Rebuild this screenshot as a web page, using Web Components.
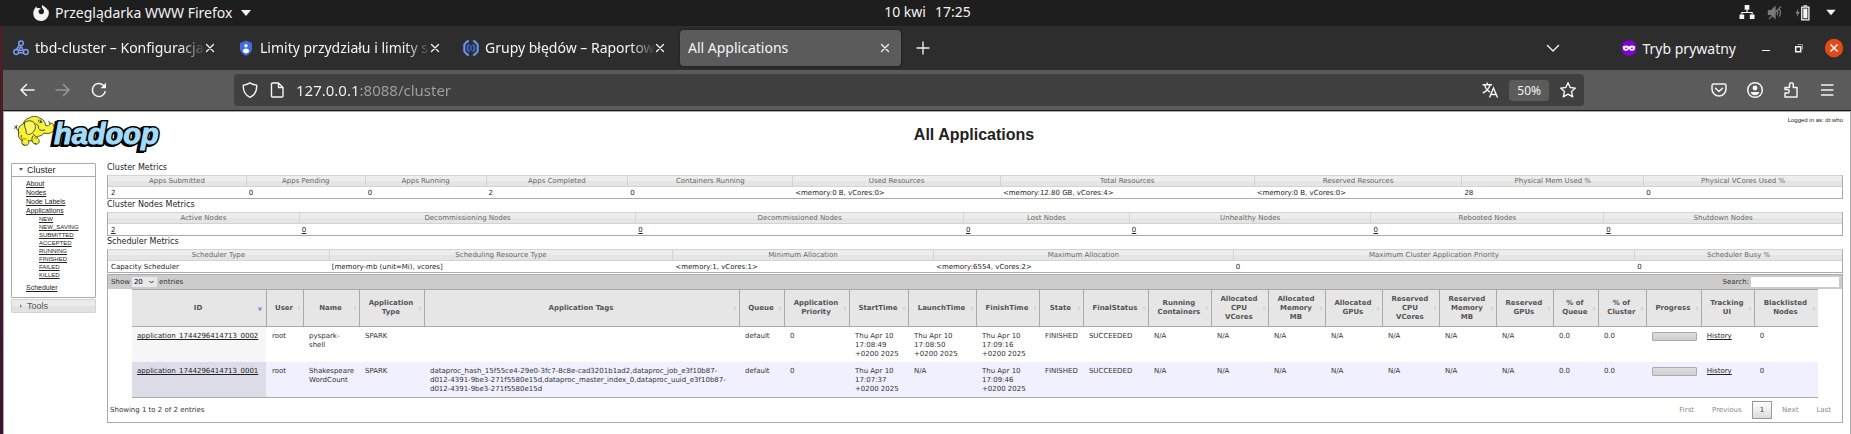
<!DOCTYPE html>
<html lang="pl">
<head>
<meta charset="utf-8">
<title>All Applications</title>
<style>
  html, body { margin: 0; height: 100%; }
  body { font-family: "Noto Sans", "Open Sans", sans-serif; background: #2d2d2d; }
</style>
</head>
<body>
<desktop-shell></desktop-shell>

<script>
const define = (name, html) => customElements.define(name, class extends HTMLElement {
  connectedCallback() {
    if (this.shadowRoot) return;
    const root = this.attachShadow({ mode: 'open' });
    const tpl = document.createElement('template');
    tpl.innerHTML = typeof html === 'function' ? html(this) : html;
    root.append(tpl.content.cloneNode(true));
  }
});

/* ---------- icons ---------- */
const line = (d, w = 1.4) => `<path d="${d}" fill="none" stroke="currentColor" stroke-width="${w}" stroke-linecap="round" stroke-linejoin="round"/>`;
const ICONS = {
  firefox: `<path fill="#f4f4f4" d="M3.2 1.2C3.6 2.4 4 3 5 3.2 6.200 2.800 7.200 3.200 8 4 6.800 4.200 6.400 5 5.600 5.400 5.200 7.800 6.600 9.200 8.200 9.200 10.200 9.200 11.200 7.800 11 6.200 10.800 4.800 9.800 3.800 9 2.600 8.700 1.700 9 .8 9.600 0 11 2 13.600 2.600 14.800 5.200 15 4.800 15 4.400 14.900 3.900 16 6 16.200 8.600 15.200 11 13.800 14.200 11 16 8 16 3.800 16 .5 13 .3 8.800 .2 6.200 1 4 2.300 2.900Z"/>`,
  triangle: `<path fill="#f4f4f4" d="M3 5h10l-5 6z"/>`,
  network: `<path fill="#f4f4f4" d="M5.500 0h5v5h-5zM0 10h5v5H0zM11 10h5v5h-5z"/><path d="M8 5v3M2.500 10V8h11v2" fill="none" stroke="#f4f4f4" stroke-width="1.200"/>`,
  mute: `<g fill="none" stroke="#7b7b7b" stroke-width="1.300"><path fill="#7b7b7b" d="M1 6h3l4-4v12L4 10H1z"/><path d="M10 5q2 3 0 6M12.200 3.500q3.400 4.500 0 9M1.500 15 14.500 1.500"/></g>`,
  battery: `<path fill="#8a8a8a" d="M3.500 3.500 0 9h2l-.8 4L4.500 7.500h-2z"/><path fill="none" stroke="#f4f4f4" stroke-width="1.400" d="M6.700 2.200h7.600v13.600H6.700z"/><path fill="#f4f4f4" d="M8.300 3.800h4.400v10.400H8.300zM8.500.2h4v1.500h-4z"/>`,
  cluster: `<g fill="none" stroke="#7a9bea" stroke-width="1.500"><circle cx="8" cy="3.200" r="2.300"/><circle cx="3.200" cy="12" r="2.400"/><circle cx="12.800" cy="12" r="2.400"/><circle cx="8" cy="9" r="1.600"/><path d="M8 5.500v2M6.600 10 5.200 11M9.400 10l1.400 1M6.500 5 3.500 9.500M5.600 12.800h4.800"/></g>`,
  guard: `<path fill="#3f6fdf" d="M8 .5 14 3v5c0 4-2.600 6.400-6 7.700C4.600 14.400 2 12 2 8V3z"/><circle cx="8" cy="5.800" r="1.700" fill="#fff"/><path fill="#fff" d="M4.700 11.200q.6-2.700 3.300-2.700t3.300 2.700q-1.400 1.800-3.300 2.300-1.900-.5-3.300-2.300z"/>`,
  errors: `<g fill="none" stroke="#6b93ea"><path stroke-width="2" d="M6 1.200H4.500L1.300 4.500v7l3.200 3.300H6M10 1.200h1.500l3.200 3.300v7l-3.200 3.300H10"/><path stroke="#2f62d0" stroke-width="2.200" d="M6.500 4.500 4.700 6v4l1.800 1.500M9.500 4.500 11.300 6v4l-1.800 1.500"/><path stroke="#2f62d0" stroke-width="1.600" d="M8 5.500v5"/></g>`,
  close: line('M4.500 4.500l7 7M11.500 4.500l-7 7', 1.300),
  plus: line('M8 2v12M2 8h12', 1.300),
  chevron: line('M2.500 5.500 8 11l5.500-5.500', 1.400),
  mask: `<circle cx="8" cy="8" r="7.700" fill="#8000d7"/><path fill="#fff" fill-rule="evenodd" d="M1.800 6.600Q5 4.600 8 6.400q3-1.800 6.200.2.200 4.200-3 4.200-1.900 0-3.200-1.900-1.300 1.900-3.200 1.900-3.200 0-3-4.200zM3.600 7.900Q5.200 10 6.600 8.300 5.200 6.900 3.600 7.900zM12.400 7.900Q10.800 10 9.400 8.300q1.400-1.400 3-.4z"/>`,
  minimize: `<path fill="#f4f4f4" d="M4 10h8v1H4z"/>`,
  restore: `<path fill="none" stroke="#f4f4f4" stroke-width="1.500" d="M4.700 6.700h5v5h-5z"/><path fill="none" stroke="#9a9a9a" d="M6.500 4.500h5v5"/>`,
  quit: `<circle cx="10" cy="10" r="9.200" fill="#e24a18"/><path d="M6.500 6.500l7 7M13.500 6.500l-7 7" stroke="#fff" stroke-width="1.500" fill="none"/>`,
  back: line('M15 8H2M7.500 2.500 2 8l5.500 5.500', 1.500),
  forward: line('M1 8h13M8.500 2.500 14 8l-5.500 5.500', 1.500),
  reload: `<path d="M14.300 9a6.500 6.500 0 1 1-2-5.700L14 5" fill="none" stroke="currentColor" stroke-width="1.500"/><path d="M15 .8v5.400H9.600z" fill="currentColor"/>`,
  shield: line('M8 .8c2.500 1.700 4.500 2 6.700 2.400.3 5.200-1.200 9.600-6.700 12.200C2.500 12.800 1 8.400 1.300 3.200 3.500 2.800 5.500 2.500 8 .8z', 1.400),
  page: line('M3.500 1h6L14 5.500V14q0 1-1 1H3.500q-1 0-1-1V2q0-1 1-1zM9.500 1v4.500H14', 1.400),
  translate: `<g fill="none" stroke="currentColor" stroke-width="1.400"><path d="M.5 2.700h9.500M5.200 .5v2.200M8 2.700C7.300 6.500 4 9.500 .8 11M2.500 2.700C3.300 6 5.500 8.800 8 10"/><path d="M7.500 15.500 11.500 6l4 9.500M9 12.500h5"/></g>`,
  star: line('M8 .7l2.200 4.800 5.200.6-3.900 3.500 1.200 5.200L8 12.200l-4.700 2.600 1.200-5.200L.6 6.100l5.200-.6z', 1.400),
  pocket: line('M2.500 2h11Q15 2 15 3.500V7a7 7 0 0 1-14 0V3.500Q1 2 2.500 2zM4.500 6.200 8 9.500l3.500-3.300', 1.500),
  account: `<circle cx="8" cy="8" r="7.300" fill="none" stroke="currentColor" stroke-width="1.500"/><circle cx="8" cy="6" r="2.400" fill="currentColor"/><path fill="currentColor" d="M3.600 10h8.800q-1.200 3.200-4.400 3.200T3.600 10z"/>`,
  puzzle: line('M2 15V11h2a1.800 1.800 0 1 0 0-3.500H2V5.500h4.500V2.700a1.900 1.900 0 1 1 3.800 0v2.800h3.700V15z', 1.500),
  menu: line('M2.500 3h11.500M2.500 8h11.500M2.500 13h11.500', 1.300)
};
define('ui-icon', el => `
  <style>:host{display:inline-flex;width:16px;height:16px;flex:none} svg{width:100%;height:100%;overflow:visible}</style>
  <svg viewBox="${el.getAttribute('name') === 'quit' ? '0 0 20 20' : '0 0 16 16'}" aria-hidden="true">${ICONS[el.getAttribute('name')]}</svg>`);

const RESET = 'button{font:inherit;color:inherit;background:none;border:0;padding:0;margin:0;display:flex;align-items:center}';

/* ---------- desktop panel ---------- */
define('desktop-panel', `
  <style>${RESET}
    :host{display:grid;grid-template-columns:1fr auto 1fr;align-items:center;height:26px;background:#1e1e1e;color:#f2f2f2;font-size:14px;line-height:24px}
    .app{margin-left:33px;gap:6px;line-height:24px}
    .clock{gap:9px;line-height:20px;padding:0 0 2px 4px}
    .tray{justify-self:end;gap:12px;padding:0 12px 2px 0;color:#fff}
    .tray ui-icon{height:15px}
  </style>
  <button class="app"><ui-icon name="firefox"></ui-icon>Przeglądarka WWW Firefox<ui-icon name="triangle"></ui-icon></button>
  <button class="clock"><span>10 kwi</span><span>17:25</span></button>
  <button class="tray" aria-label="System"><ui-icon name="network"></ui-icon><ui-icon name="mute"></ui-icon><ui-icon name="battery"></ui-icon><ui-icon name="triangle"></ui-icon></button>`);

/* ---------- tabs ---------- */
define('browser-tab', `
  <style>${RESET}
    :host{display:flex;align-items:center;box-sizing:border-box;width:221px;height:36px;padding:0 8px;border-radius:4px;gap:6px;color:#f4f4f4}
    :host([active]){background:#5b5b5b;box-shadow:0 0 3px #1c1c1c}
    .name{flex:1;min-width:0;overflow:hidden;white-space:nowrap;line-height:22px}
    :host(:not([active])) .name{-webkit-mask-image:linear-gradient(90deg,#000 86%,transparent 101%)}
    :host(:not([active])) button{margin-left:-8px}
  </style>
  <slot name="icon"></slot><span class="name"><slot></slot></span>
  <button aria-label="Zamknij kartę"><ui-icon name="close"></ui-icon></button>`);

define('tab-strip', `
  <style>${RESET}
    :host{display:flex;align-items:center;height:44px;padding:0 7px 0 2px;background:#2d2d2d;color:#f4f4f4;font-size:14px}
    .tabs{display:flex;gap:4px} .add{margin-left:14px;margin-right:auto}
    .private{display:flex;align-items:center;gap:6px;margin:0 22px 0 60px}
    .win{display:flex;align-items:center;gap:17px}
    .quit{width:20px;height:20px}
  </style>
  <div class="tabs">
    <browser-tab><ui-icon slot="icon" name="cluster"></ui-icon>tbd-cluster – Konfiguracja</browser-tab>
    <browser-tab><ui-icon slot="icon" name="guard"></ui-icon>Limity przydziału i limity s</browser-tab>
    <browser-tab><ui-icon slot="icon" name="errors"></ui-icon>Grupy błędów – Raportow</browser-tab>
    <browser-tab active>All Applications</browser-tab>
  </div>
  <button class="add" aria-label="Nowa karta"><ui-icon name="plus"></ui-icon></button>
  <button aria-label="Lista kart"><ui-icon name="chevron"></ui-icon></button>
  <span class="private"><ui-icon name="mask"></ui-icon>Tryb prywatny</span>
  <div class="win">
    <button aria-label="Minimalizuj"><ui-icon name="minimize"></ui-icon></button>
    <button aria-label="Przywróć"><ui-icon name="restore"></ui-icon></button>
    <button aria-label="Zamknij"><ui-icon class="quit" name="quit"></ui-icon></button>
  </div>`);

/* ---------- navigation ---------- */
define('nav-bar', `
  <style>${RESET}
    :host{display:grid;grid-template-columns:231px minmax(0,1fr) 267px;align-items:center;height:40px;background:#5b5b5b;color:#f4f4f4;border-bottom:1px solid #1b1b1b}
    .left{display:flex;gap:20px;padding-left:16px} .off{color:#989898}
    .url{display:flex;align-items:center;height:32px;background:#404040;border-radius:4px;padding:0 8px;gap:11px}
    input{flex:1;min-width:0;border:0;outline:0;padding:0;font:15px "Noto Sans","Open Sans",sans-serif;
      background:linear-gradient(90deg,#f6f6f6 64px,#a0a0a0 64px);-webkit-background-clip:text;background-clip:text;-webkit-text-fill-color:transparent}
    .zoom{background:#5b5b5b;border-radius:3px;height:21px;padding:0 8px;font-size:12px}
    .right{display:flex;justify-content:flex-end;gap:20px;padding-right:16px}
  </style>
  <div class="left">
    <button aria-label="Wstecz"><ui-icon name="back"></ui-icon></button>
    <button class="off" aria-label="Dalej"><ui-icon name="forward"></ui-icon></button>
    <button aria-label="Odśwież"><ui-icon name="reload"></ui-icon></button>
  </div>
  <div class="url">
    <ui-icon name="shield"></ui-icon><ui-icon name="page"></ui-icon>
    <input type="text" aria-label="Adres" value="127.0.0.1:8088/cluster">
    <button aria-label="Przetłumacz"><ui-icon name="translate"></ui-icon></button>
    <button class="zoom">50%</button>
    <button aria-label="Zakładka"><ui-icon name="star"></ui-icon></button>
  </div>
  <div class="right">
    <button aria-label="Pocket"><ui-icon name="pocket"></ui-icon></button>
    <button aria-label="Konto"><ui-icon name="account"></ui-icon></button>
    <button aria-label="Rozszerzenia"><ui-icon name="puzzle"></ui-icon></button>
    <button aria-label="Menu"><ui-icon name="menu"></ui-icon></button>
  </div>`);

/* ---------- Hadoop logo ---------- */
define('hadoop-logo', `
  <style>:host{display:block} svg{display:block;width:150px;height:38px;overflow:visible}
    text{font:italic bold 29px "Liberation Sans",Arial,sans-serif;stroke-linejoin:miter}</style>
  <svg viewBox="0 0 150 38" role="img" aria-label="Hadoop">
    <text x="40" y="31" fill="#000" stroke="#000" stroke-width="4" aria-hidden="true">hadoop</text>
    <text x="42" y="30" fill="#000" stroke="#000" stroke-width="4" aria-hidden="true">hadoop</text>
    <text x="42" y="30" fill="#a3dcfb" stroke="#a3dcfb" stroke-width="1">hadoop</text>
    <g transform="translate(-8 -6) scale(.3333)" stroke="#3a3a10" stroke-width="2.600" stroke-linejoin="round" stroke-linecap="round">
      <path fill="none" d="M44 70Q38 68 37 58M37 58l-5-4M37 58l2-6M37 58l-6 3"/>
      <path fill="#f6f23c" d="M44 74C40 62 48 50 58 48 60 38 66 32 76 30 84 23 100 24 108 31 118 34 124 42 125 52 132 56 137 52 138 46 144 44 150 48 150 58 150 72 138 80 120 75 116 82 108 85 103 84L100 90C108 96 108 106 98 108 90 110 86 104 84 98 80 100 76 99 73 97 76 106 74 112 63 112 53 112 52 104 55 97 46 95 41 86 44 74Z"/>
      <path fill="#fbf86a" d="M62 44C58 56 68 62 67 76 76 84 84 76 90 69 98 58 94 44 84 40 76 37 67 38 62 44Z"/>
      <path fill="none" d="M96 46Q106 54 104 62 110 70 122 66M88 78Q92 86 100 88M54 98Q50 88 52 82M84 98Q82 90 86 84M138 48l-4-8M57 108l4 3M92 106l4 2"/>
      <path fill="#fff" stroke-width="2" d="M105 36q7-2 9 7-6 4-10-1z"/><circle cx="110" cy="41" r="1.500" fill="#222"/>
      <path fill="#c9bd1c" stroke="none" d="M46 80Q52 92 70 90 66 98 56 96 46 92 46 80zM88 84q6 6 12 5l-4 6q-8 0-8-11z"/>
    </g>
  </svg>`);

/* ---------- sidebar ---------- */
define('side-nav', `
  <style>
    :host{display:flex;flex-direction:column;gap:1px;font-family:"Liberation Sans",Arial,sans-serif;color:#222}
    section{border:1px solid #aaa;border-radius:1px;background:#fff}
    h3{margin:0;font:9px/12px "Liberation Sans",Arial,sans-serif;padding-left:7px;display:flex;align-items:center;gap:4px}
    h3 svg{width:4px;height:4px}
    .open h3{border-bottom:1px solid #aaa}
    .shut{border-color:#d3d3d3;background:linear-gradient(#ebebeb 50%,#e2e2e2 50%);color:#555}
    ul{list-style:none;margin:0;padding:0} nav{padding:2px 0 5px 14px}
    li{font-size:7px;line-height:9px} li li{font-size:6px;line-height:8px} li ul{padding:0 0 4px 13px}
    a{color:#222;text-decoration:underline;text-underline-offset:1px}
  </style>
  <section class="open"><h3><svg viewBox="0 0 4 4"><path fill="#555" d="M0 0h4L2 3z"/></svg>Cluster</h3>
    <nav><ul><li><a href="#">About</a></li><li><a href="#">Nodes</a></li><li><a href="#">Node Labels</a></li>
      <li><a href="#">Applications</a><ul>
        ${['NEW', 'NEW_SAVING', 'SUBMITTED', 'ACCEPTED', 'RUNNING', 'FINISHED', 'FAILED', 'KILLED'].map(s => `<li><a href="#">${s}</a></li>`).join('')}
      </ul></li><li><a href="#">Scheduler</a></li></ul></nav>
  </section>
  <section class="shut"><h3><svg viewBox="0 0 4 4"><path fill="#888" d="M1 0v4L3 2z"/></svg>Tools</h3></section>`);

/* ---------- metrics tables ---------- */
const esc = s => s.replace(/&/g, '&amp;').replace(/</g, '&lt;');
const cols = widths => {
  const sum = widths.reduce((a, b) => a + b);
  return '<colgroup>' + widths.map(w => `<col style="width:${(w / sum * 100).toFixed(3)}%">`).join('') + '</colgroup>';
};
const METRICS = {
  cluster: { w: [138, 119, 121, 142, 165, 208, 254, 208, 182, 199],
    h: ['Apps Submitted', 'Apps Pending', 'Apps Running', 'Apps Completed', 'Containers Running', 'Used Resources', 'Total Resources', 'Reserved Resources', 'Physical Mem Used %', 'Physical VCores Used %'],
    r: ['2', '0', '0', '2', '0', '<memory:0 B, vCores:0>', '<memory:12.80 GB, vCores:4>', '<memory:0 B, vCores:0>', '28', '0'] },
  nodes: { w: [191, 337, 328, 166, 242, 233, 239], links: true,
    h: ['Active Nodes', 'Decommissioning Nodes', 'Decommissioned Nodes', 'Lost Nodes', 'Unhealthy Nodes', 'Rebooted Nodes', 'Shutdown Nodes'],
    r: ['2', '0', '0', '0', '0', '0', '0'] },
  scheduler: { w: [221, 344, 261, 300, 402, 208],
    h: ['Scheduler Type', 'Scheduling Resource Type', 'Minimum Allocation', 'Maximum Allocation', 'Maximum Cluster Application Priority', 'Scheduler Busy %'],
    r: ['Capacity Scheduler', '[memory-mb (unit=Mi), vcores]', '<memory:1, vCores:1>', '<memory:6554, vCores:2>', '0', '0'] }
};
define('metrics-table', el => {
  const m = METRICS[el.getAttribute('kind')];
  return `<style>
    :host{display:block}
    h2{margin:0;font:8px/11px "DejaVu Sans",Verdana,sans-serif;color:#222;padding-bottom:2px}
    table{width:100%;table-layout:fixed;border-collapse:separate;border-spacing:0;font:7px/10px "DejaVu Sans",Verdana,sans-serif;border:1px solid #aaa;border-top-color:#d3d3d3}
    th{font-weight:400;color:#666;padding:0;background:linear-gradient(#ededed 50%,#e5e5e5 50%);border-bottom:1px solid #d3d3d3}
    th+th{border-left:1px solid #d3d3d3}
    td{padding:1px 3px 0;color:#222} a{color:#222;text-underline-offset:1px}
  </style>
  <h2><slot></slot></h2>
  <table>${cols(m.w)}<thead><tr>${m.h.map(t => `<th scope="col">${t}</th>`).join('')}</tr></thead>
  <tbody><tr>${m.r.map(t => `<td>${m.links ? `<a href="#">${t}</a>` : esc(t)}</td>`).join('')}</tr></tbody></table>`;
});

/* ---------- applications table ---------- */
const APP_COLS = [['ID', 134], ['User', 37], ['Name', 56], ['Application Type', 65], ['Application Tags', 315], ['Queue', 45], ['Application Priority', 65], ['StartTime', 59], ['LaunchTime', 68], ['FinishTime', 63], ['State', 44], ['FinalStatus', 65], ['Running Containers', 63], ['Allocated CPU VCores', 57], ['Allocated Memory MB', 57], ['Allocated GPUs', 57], ['Reserved CPU VCores', 57], ['Reserved Memory MB', 57], ['Reserved GPUs', 57], ['% of Queue', 45], ['% of Cluster', 48], ['Progress', 55], ['Tracking UI', 53], ['Blacklisted Nodes', 64]];
const NA = Array(7).fill('N/A');
const APPS = [
  ['application_1744296414713_0002', 'root', 'pyspark-<br>shell', 'SPARK', '', 'default', '0', 'Thu Apr 10 17:08:49 +0200 2025', 'Thu Apr 10 17:08:50 +0200 2025', 'Thu Apr 10 17:09:16 +0200 2025', 'FINISHED', 'SUCCEEDED', ...NA, '0.0', '0.0', 'progress', 'History', '0'],
  ['application_1744296414713_0001', 'root', 'Shakespeare WordCount', 'SPARK', 'dataproc_hash_15f55ce4-29e0-3fc7-8c8e-cad3201b1ad2,dataproc_job_e3f10b87-d012-4391-9be3-271f5580e15d,dataproc_master_index_0,dataproc_uuid_e3f10b87-d012-4391-9be3-271f5580e15d', 'default', '0', 'Thu Apr 10 17:07:37 +0200 2025', 'N/A', 'Thu Apr 10 17:09:46 +0200 2025', 'FINISHED', 'SUCCEEDED', ...NA, '0.0', '0.0', 'progress', 'History', '0']
];
const cell = (v, i) => {
  if (i === 0 || i === 22) return `<a href="#">${v}</a>`;
  if (v === 'progress') return '<progress value="0" max="100" aria-label="Progress"></progress>';
  if (v.startsWith('Thu')) return v.replace(' +', '<br>+');
  return v;
};
const SORT = '<svg viewBox="0 0 6 9"><path fill="#d8d8d8" stroke="#f4f4f4" stroke-width=".7" d="M3 .5 5.300 4v1L3 8.500.700 5V4z"/></svg>';
const SORTED = '<svg viewBox="0 0 6 9"><path fill="#8a8af5" d="M.8 3.500h4.400L3.500 7h-1z"/></svg>';
define('apps-table', `
  <style>
    :host{display:block;border:1px solid #aaa;font:7px/9px "DejaVu Sans",Verdana,sans-serif;color:#333}
    .bar{display:flex;justify-content:space-between;align-items:center;height:14px;background:#ccc;padding:0 3px}
    label{display:flex;align-items:center;gap:2px}
    .pick{display:grid;align-items:center} .pick>*{grid-area:1/1}
    .pick svg{width:5px;height:4px;justify-self:end;margin-right:3px;pointer-events:none}
    select{appearance:none;font:inherit;color:#000;background:#e9e9ed;border:0;border-radius:0;width:25px;height:10px;padding:0 2px;margin:0}
    input{font:inherit;border:0;padding:0 2px;margin:0;width:88px;height:10px;box-sizing:border-box;background:#fff}
    .scroll{padding:0 24px}
    table{width:100%;table-layout:fixed;border-collapse:separate;border-spacing:0;border-top:1px solid #aaa;border-bottom:1px solid #aaa}
    th{position:relative;height:36px;padding:0 8px 0 6px;background:#e6e6e6;border-bottom:1px solid #aaa;color:#555;font-weight:700;text-align:center}
    th+th{border-left:1px solid #aaa}
    th svg{position:absolute;right:1px;top:14px;width:6px;height:9px}
    th:first-child svg{right:3px}
    td{padding:5px 4px 3px 6px;vertical-align:top;height:27px;overflow-wrap:break-word}
    td:first-child{padding-left:5px}
    td:nth-child(3){padding-right:3px}
    td:nth-child(11),td:nth-child(12){padding-right:0}
    tbody tr:first-child td:first-child{background:#f6f6f6}
    tbody tr:nth-child(2){background:#f0f0ff} tbody tr:nth-child(2) td:first-child{background:#dddde9}
    a{color:#222;text-underline-offset:1px}
    progress{appearance:none;display:block;box-sizing:border-box;width:100%;height:9px;border:1px solid #aaa;border-radius:1px;background:#d6d6d6}
    progress::-webkit-progress-bar{background:linear-gradient(#dcdcdc,#d0d0d0)}
    progress::-webkit-progress-value{background:#aaa}
    .foot{display:flex;justify-content:space-between;align-items:center;height:24px;padding:0 3px 0 2px}
    .pages{display:flex;gap:2px}
    button{font:inherit;color:#888;background:none;border:1px solid transparent;padding:0 7px;height:18px;margin:0}
    .on{color:#333;border-color:#979797;background:linear-gradient(#fff,#dcdcdc)}
  </style>
  <div class="bar">
    <label>Show <span class="pick"><select><option>20</option><option>50</option></select><svg viewBox="0 0 5 4"><path d="M.5 1l2 2 2-2" fill="none" stroke="#222"/></svg></span> entries</label>
    <label>Search: <input type="search"></label>
  </div>
  <div class="scroll"><table>${cols(APP_COLS.map(c => c[1]))}
    <thead><tr>${APP_COLS.map((c, i) => `<th scope="col">${c[0]}${i ? SORT : SORTED}</th>`).join('')}</tr></thead>
    <tbody>${APPS.map(r => `<tr>${r.map((v, i) => `<td>${cell(v, i)}</td>`).join('')}</tr>`).join('')}</tbody>
  </table></div>
  <div class="foot"><span>Showing 1 to 2 of 2 entries</span>
    <div class="pages"><button>First</button><button>Previous</button><button class="on">1</button><button>Next</button><button>Last</button></div></div>`);

/* ---------- page ---------- */
define('yarn-page', `
  <style>
    :host{display:block;background:#fff;border:1px solid #aaa;border-bottom:0;box-sizing:border-box;color:#222}
    header{display:grid;grid-template-columns:94px 1fr;height:50px}
    hadoop-logo{margin:2px 0 0 8px}
    h1{grid-area:1/2;margin:0;text-align:center;font:bold 16px/18px "Liberation Sans",Arial,sans-serif;padding-top:14px}
    .who{grid-area:1/2;justify-self:end;font:6px/8px "Liberation Sans",Arial,sans-serif;padding:4px 7px 0 0}
    .cols{display:grid;grid-template-columns:85px minmax(0,1fr);gap:11px;padding:0 7px;align-items:start}
    side-nav{margin-top:1px}
    apps-table{margin-top:1px}
  </style>
  <header><hadoop-logo></hadoop-logo><h1>All Applications</h1><span class="who">Logged in as: dr.who</span></header>
  <div class="cols"><side-nav></side-nav>
    <main>
      <metrics-table kind="cluster">Cluster Metrics</metrics-table>
      <metrics-table kind="nodes">Cluster Nodes Metrics</metrics-table>
      <metrics-table kind="scheduler">Scheduler Metrics</metrics-table>
      <apps-table></apps-table>
    </main></div>`);

define('desktop-shell', `
  <style>
    :host{display:flex;flex-direction:column;min-height:100vh}
    .desk{flex:1;display:flex;padding-left:3px;background:linear-gradient(#4b2024,#3a1530)}
    .win{flex:1;min-width:0;display:flex;flex-direction:column} yarn-page{flex:1}
  </style>
  <desktop-panel></desktop-panel>
  <div class="desk"><div class="win"><tab-strip></tab-strip><nav-bar></nav-bar><yarn-page></yarn-page></div></div>`);
</script>
</body>
</html>
